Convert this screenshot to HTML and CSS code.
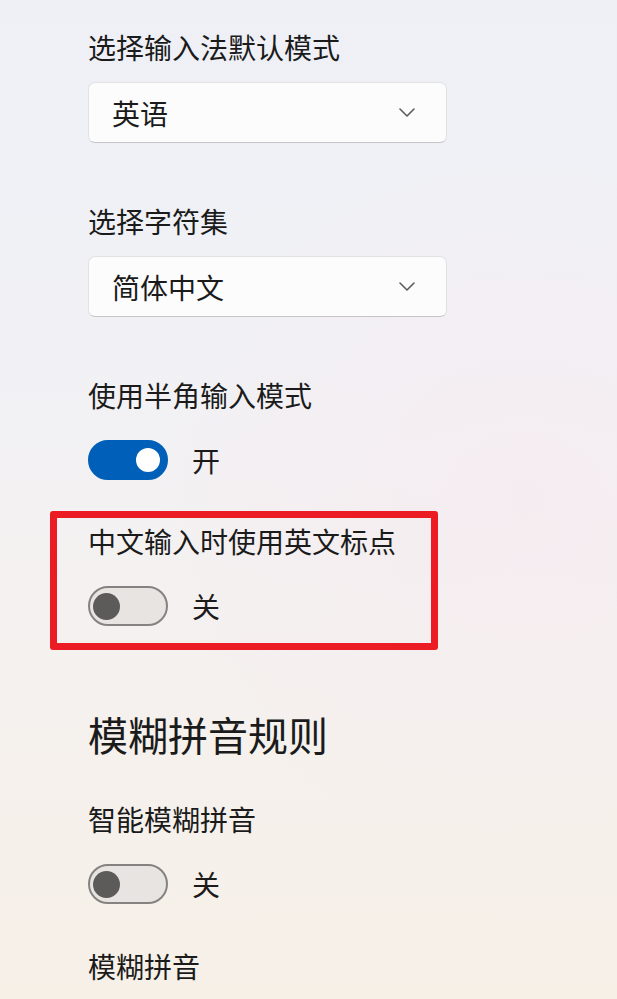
FILE: index.html
```html
<!DOCTYPE html>
<html lang="zh-CN">
<head>
  <meta charset="UTF-8" />
  <meta name="viewport" content="width=device-width, initial-scale=1.0"/>
  <title>输入法设置</title>
  <link rel="stylesheet" href="styles.css">
</head>
<body>
  <div class="page">
    <div class="label first">选择输入法默认模式</div>
    <div class="dropdown">
      <span>英语</span>
      <svg class="chevron" width="16" height="9" viewBox="0 0 16 9"><path d="M1 1 L8 8 L15 1" /></svg>
    </div>

    <div class="label gap-big">选择字符集</div>
    <div class="dropdown">
      <span>简体中文</span>
      <svg class="chevron" width="16" height="9" viewBox="0 0 16 9"><path d="M1 1 L8 8 L15 1" /></svg>
    </div>

    <div class="label gap-big">使用半角输入模式</div>
    <div class="toggle-row">
      <div class="toggle on"><div class="knob"></div></div>
      <span class="state">开</span>
    </div>

    <div class="highlight">
      <div class="label">中文输入时使用英文标点</div>
      <div class="toggle-row">
        <div class="toggle"><div class="knob"></div></div>
        <span class="state">关</span>
      </div>
    </div>

    <h2 class="section-title">模糊拼音规则</h2>

    <div class="label after-title">智能模糊拼音</div>
    <div class="toggle-row">
      <div class="toggle"><div class="knob"></div></div>
      <span class="state">关</span>
    </div>

    <div class="label after-toggle">模糊拼音</div>
  </div>
</body>
</html>
```

FILE: styles.css
```css
html, body {
  margin: 0;
  height: 100%;
}

body {
  background:
    radial-gradient(ellipse at 85% 50%, rgba(246, 234, 240, 0.7) 0%, rgba(246, 234, 240, 0) 50%),
    linear-gradient(to bottom, #eef0f6 0%, #f1f1f5 35%, #f5f1ef 65%, #f6f0e7 100%);
  font-family: "Noto Sans CJK SC", "Noto Sans", sans-serif;
  color: #1b1b1b;
  overflow: hidden;
}

.page {
  padding: 27px 0 0 88px;
}

.label {
  font-size: 28px;
  line-height: 40px;
  white-space: nowrap;
}

.gap-big {
  margin-top: 58px;
}

.after-title {
  margin-top: 37px;
}

.after-toggle {
  margin-top: 42px;
}

.dropdown {
  box-sizing: border-box;
  width: 359px;
  height: 61px;
  margin-top: 15px;
  padding: 0 31px 0 23px;
  display: flex;
  align-items: center;
  justify-content: space-between;
  background: #fcfcfd;
  border: 1px solid #e2e2e5;
  border-bottom-color: #c6c6ca;
  border-radius: 7px;
  font-size: 28px;
}

.chevron path {
  fill: none;
  stroke: #5c5c5c;
  stroke-width: 1.6;
  stroke-linecap: round;
  stroke-linejoin: round;
}

.toggle-row {
  display: flex;
  align-items: center;
  gap: 24px;
  margin-top: 25px;
}

.toggle {
  box-sizing: border-box;
  width: 80px;
  height: 40px;
  border-radius: 20px;
  border: 2px solid #858382;
  background: #e7e4e1;
  display: flex;
  align-items: center;
  padding-left: 3px;
}

.toggle .knob {
  width: 27px;
  height: 27px;
  border-radius: 50%;
  background: #5d5b59;
}

.toggle.on {
  background: #005fb8;
  border-color: #005fb8;
  justify-content: flex-end;
  padding: 0 6px 0 0;
}

.toggle.on .knob {
  width: 24px;
  height: 24px;
  background: #ffffff;
}

.state {
  font-size: 28px;
  line-height: 40px;
}

.highlight {
  box-sizing: border-box;
  width: 388px;
  margin: 31px 0 0 -38px;
  padding: 3px 0 17px 31px;
  border: 7px solid #ec1c24;
  border-radius: 3px;
}

.section-title {
  margin: 56px 0 0;
  font-size: 40px;
  font-weight: 400;
  line-height: 56px;
}
```
